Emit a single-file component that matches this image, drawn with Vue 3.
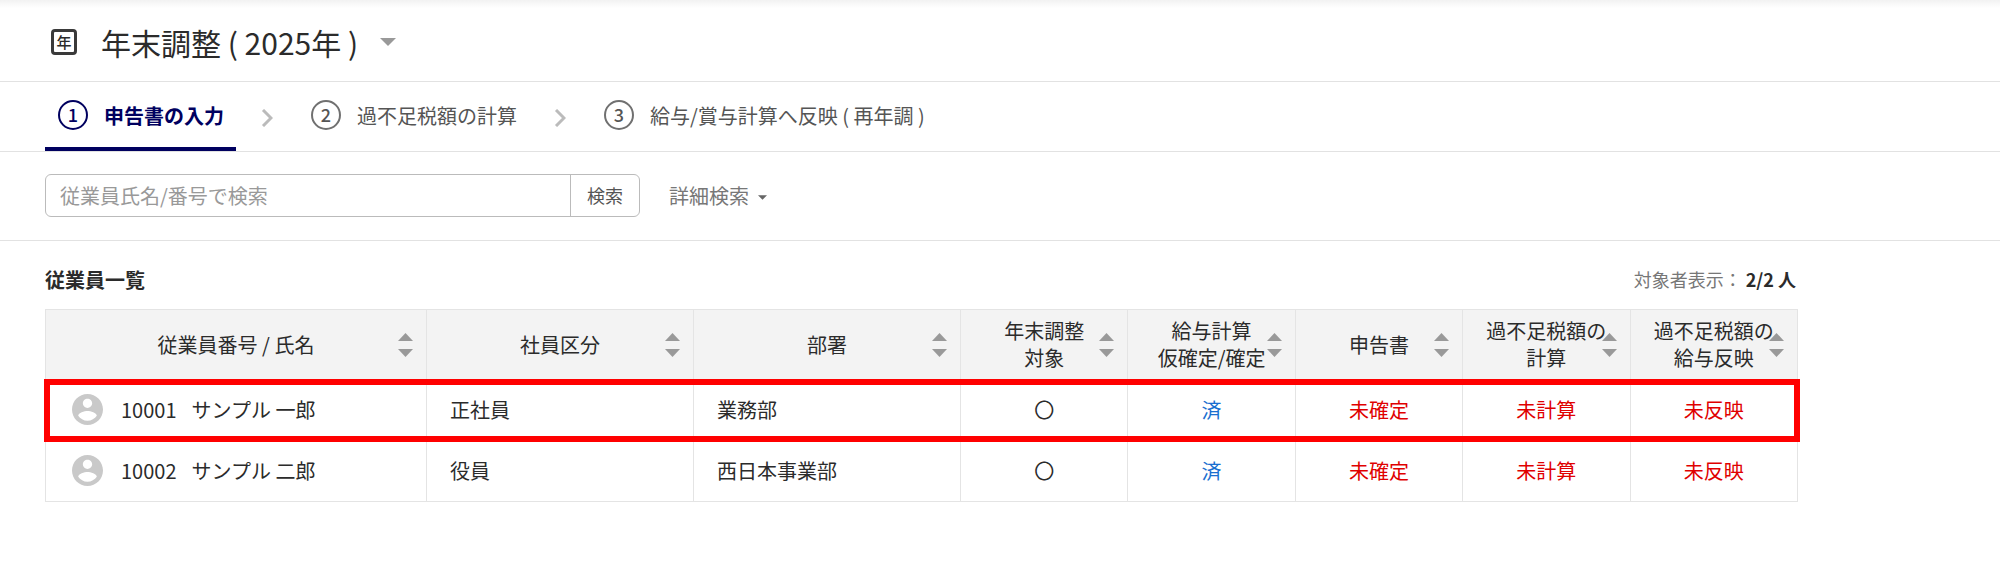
<script setup>
import { ref } from 'vue'

const keyword = ref('')

const steps = [
  { no: 1, label: '申告書の入力', active: true },
  { no: 2, label: '過不足税額の計算', active: false },
  { no: 3, label: '給与/賞与計算へ反映 ( 再年調 )', active: false },
]

const columns = [
  { key: 'name', lines: ['従業員番号 / 氏名'] },
  { key: 'type', lines: ['社員区分'] },
  { key: 'dept', lines: ['部署'] },
  { key: 'target', lines: ['年末調整', '対象'] },
  { key: 'payroll', lines: ['給与計算', '仮確定/確定'] },
  { key: 'report', lines: ['申告書'] },
  { key: 'calc', lines: ['過不足税額の', '計算'] },
  { key: 'apply', lines: ['過不足税額の', '給与反映'] },
]

const employees = [
  { no: '10001', name: 'サンプル 一郎', type: '正社員', dept: '業務部', highlighted: true },
  { no: '10002', name: 'サンプル 二郎', type: '役員', dept: '西日本事業部', highlighted: false },
]
</script>

<template>
  <div class="page">
    <header class="title-bar">
      <span class="title-icon" aria-hidden="true">年</span>
      <h1 class="title">
        <button type="button" class="title-button">
          年末調整 ( 2025年 )
          <svg class="title-caret" viewBox="0 0 16 8" aria-hidden="true"><path d="M0 0h16L8 8z" /></svg>
        </button>
      </h1>
    </header>

    <nav class="steps" aria-label="手順">
      <template v-for="(step, i) in steps" :key="step.no">
        <svg v-if="i > 0" class="chevron" viewBox="0 0 12 18" aria-hidden="true">
          <path d="M2 1L10 9L2 17" />
        </svg>
        <a href="#" class="step" :class="{ active: step.active }">
          <span class="step-no">{{ step.no }}</span>
          <span class="step-label">{{ step.label }}</span>
        </a>
      </template>
    </nav>

    <form class="search" @submit.prevent>
      <div class="search-group">
        <input v-model="keyword" class="search-input" type="text" aria-label="従業員氏名/番号で検索" placeholder="従業員氏名/番号で検索" />
        <button type="submit" class="search-button">検索</button>
      </div>
      <button type="button" class="detail-button">
        詳細検索
        <svg class="detail-caret" viewBox="0 0 10 5" aria-hidden="true"><path d="M0 0h10L5 5z" /></svg>
      </button>
    </form>

    <main class="content">
      <div class="list-head">
        <h2 class="list-title">従業員一覧</h2>
        <p class="count">対象者表示： <strong>2/2 人</strong></p>
      </div>

      <table class="employees">
        <colgroup>
          <col v-for="c in columns" :key="c.key" :class="'col-' + c.key" />
        </colgroup>
        <thead>
          <tr>
            <th v-for="c in columns" :key="c.key" scope="col">
              <button type="button" class="sort">
                <span v-for="line in c.lines" :key="line" class="sort-line">{{ line }}</span>
                <svg class="sort-icon" viewBox="0 0 15 24" aria-hidden="true">
                  <path d="M7.500 0L15 8H0zM0 16h15L7.500 24z" />
                </svg>
              </button>
            </th>
          </tr>
        </thead>
        <tbody>
          <tr v-for="e in employees" :key="e.no" :class="{ highlighted: e.highlighted }">
            <td>
              <div class="person">
                <svg class="avatar" viewBox="2 2 20 20" aria-hidden="true">
                  <path d="M12 2C6.480 2 2 6.480 2 12s4.480 10 10 10 10-4.480 10-10S17.520 2 12 2zm0 3c1.660 0 3 1.340 3 3s-1.340 3-3 3-3-1.340-3-3 1.340-3 3-3zm0 14.200c-2.500 0-4.710-1.280-6-3.220.030-1.990 4-3.080 6-3.080 1.990 0 5.970 1.090 6 3.080-1.290 1.940-3.500 3.220-6 3.220z" />
                </svg>
                <span>{{ e.no }}</span>
                <span>{{ e.name }}</span>
              </div>
            </td>
            <td>{{ e.type }}</td>
            <td>{{ e.dept }}</td>
            <td class="center">〇</td>
            <td class="center done">済</td>
            <td class="center pending">未確定</td>
            <td class="center pending">未計算</td>
            <td class="center pending">未反映</td>
          </tr>
        </tbody>
      </table>
    </main>
  </div>
</template>

<style>
body {
  background: #fff;
}
</style>

<style scoped>
.page {
  font-family: "Noto Sans CJK JP", "Noto Sans", sans-serif;
  font-size: 20px;
  line-height: 27px;
  color: #2b2b2b;
}
.page *,
.page {
  box-sizing: border-box;
}
button,
input {
  font: inherit;
  color: inherit;
  margin: 0;
  padding: 0;
  border: 0;
  background: none;
}
button {
  cursor: pointer;
}
.title-bar {
  display: flex;
  align-items: center;
  gap: 24px;
  height: 82px;
  padding: 2px 51px 0;
  border-bottom: 1px solid #e2e2e2;
  background: linear-gradient(#f2f2f2, #fff 8px);
}
.title-icon {
  display: flex;
  align-items: center;
  justify-content: center;
  width: 26px;
  height: 26px;
  border: 3px solid #3a3a3a;
  border-radius: 4px;
  font-size: 15px;
  font-weight: 500;
  line-height: 20px;
}
.title {
  margin: 0;
  font-size: 30px;
  font-weight: 400;
  line-height: 44px;
}
.title-button {
  display: flex;
  align-items: center;
  gap: 22px;
}
.title-caret {
  width: 16px;
  height: 8px;
  fill: #999;
}
.steps {
  display: flex;
  align-items: center;
  height: 70px;
  padding: 0 45px;
  border-bottom: 1px solid #e2e2e2;
}
.step {
  display: flex;
  align-items: center;
  gap: 16px;
  height: 69px;
  padding: 0 12px 0 13px;
  border-bottom: 4px solid transparent;
  color: #555;
  text-decoration: none;
}
.step-no {
  display: flex;
  align-items: center;
  justify-content: center;
  width: 30px;
  height: 30px;
  border: 2px solid #707070;
  border-radius: 50%;
  font-size: 18px;
  font-weight: 500;
}
.step-label {
  padding-top: 2px;
}
.step.active {
  border-bottom-color: #00005f;
  color: #00005f;
  font-weight: 700;
}
.step.active .step-no {
  border-color: #00005f;
}
.chevron {
  width: 12px;
  height: 18px;
  margin: 3px 25px 0;
  fill: none;
  stroke: #bbb;
  stroke-width: 3px;
}
.search {
  display: flex;
  align-items: center;
  gap: 29px;
  height: 89px;
  padding: 0 45px 2px;
  border-bottom: 1px solid #e2e2e2;
}
.search-group {
  display: flex;
  width: 595px;
  height: 43px;
  border: 1px solid #bbb;
  border-radius: 6px;
}
.search-input {
  flex: 1;
  min-width: 0;
  padding: 0 14px;
}
.search-input::placeholder {
  color: #999;
  opacity: 1;
}
.search-button {
  width: 69px;
  border-left: 1px solid #bbb;
  font-size: 18px;
  color: #555;
}
.detail-button {
  display: flex;
  align-items: center;
  gap: 9px;
  color: #777;
}
.detail-caret {
  width: 9px;
  height: 5px;
  margin-top: 4px;
  fill: #666;
}
.content {
  max-width: 1843px;
  padding: 0 45px;
}
.list-head {
  display: flex;
  align-items: center;
  justify-content: space-between;
  padding: 25px 2px 16px 0;
}
.list-title {
  margin: 0;
  font-size: 20px;
  font-weight: 700;
}
.count {
  margin: 0;
  font-size: 18px;
  color: #777;
}
.count strong {
  color: #2b2b2b;
  font-weight: 700;
}
.employees {
  width: 100%;
  table-layout: fixed;
  border-collapse: collapse;
}
.col-name {
  width: 381px;
}
.col-type,
.col-dept {
  width: 267px;
}
th,
td {
  border: 1px solid #e4e4e4;
}
th {
  position: relative;
  height: 70px;
  padding: 0 0 1px;
  background: #f3f3f3;
  font-weight: 400;
}
.sort {
  width: 100%;
}
.sort-line {
  display: block;
  white-space: nowrap;
}
.sort-icon {
  position: absolute;
  top: 50%;
  right: 13px;
  width: 15px;
  height: 24px;
  margin-top: -12px;
  fill: #999;
}
td {
  height: 61px;
  padding: 0 23px 1px;
}
.center {
  padding: 0 0 1px;
  text-align: center;
}
.done {
  color: #1a6fd0;
}
.pending {
  color: #e00000;
}
.person {
  display: flex;
  align-items: center;
  gap: 15px;
}
.avatar {
  width: 31px;
  height: 31px;
  margin: 0 3px;
  fill: #c9c9c9;
}
.highlighted {
  position: relative;
}
.highlighted td:first-child::after {
  content: "";
  position: absolute;
  inset: -1px -2px;
  border: 6px solid #f00;
  pointer-events: none;
}
</style>
